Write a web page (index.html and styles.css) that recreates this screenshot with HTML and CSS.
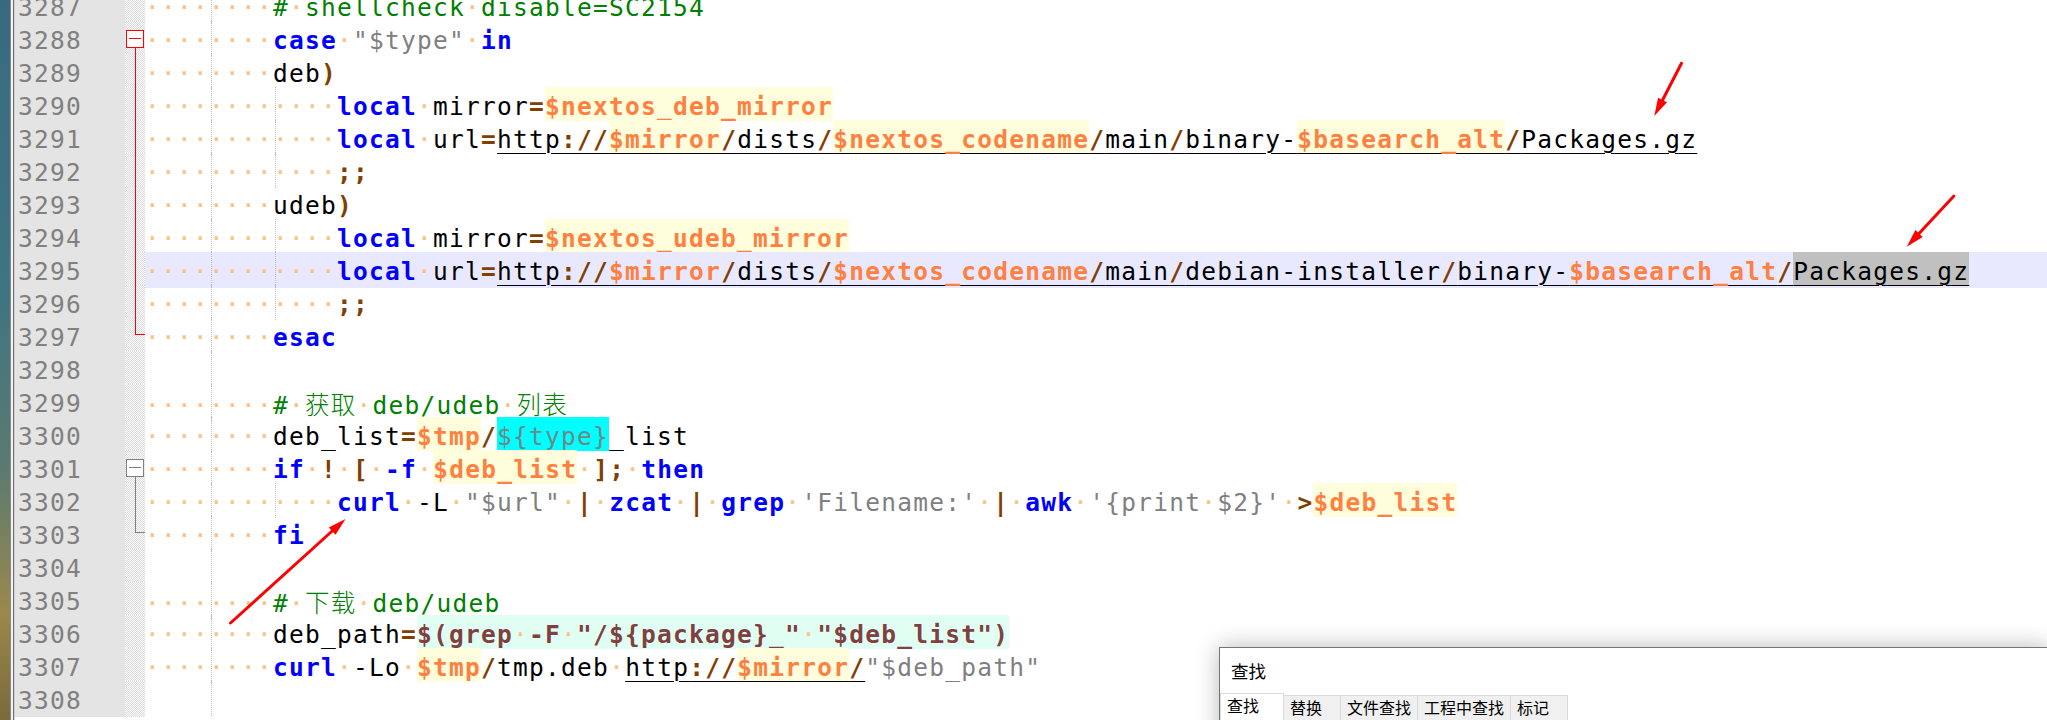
FILE: index.html
```html
<!DOCTYPE html>
<html lang="zh-CN">
  <head>
    <meta charset="UTF-8">
    <meta name="viewport" content="width=device-width, initial-scale=1.0">
    <link rel="stylesheet" href="styles.css">
    <title>Notepad++ - build.sh</title>
  </head>
  <body>
    <div class="window">
      <div class="desk"></div>
      <div class="frame"></div>
      <div class="editor">
        <div class="rows">
          <div class="row"><span class="num">3287</span><span class="fold"></span><span class="code"><i>········</i><span class="c">#<i>·</i>shellcheck<i>·</i>disable=SC2154</span></span></div>
          <div class="row"><span class="num">3288</span><span class="fold head red"><b></b></span><span class="code"><i>········</i><span class="k">case</span><i>·</i><span class="s">"$type"</span><i>·</i><span class="k">in</span></span></div>
          <div class="row"><span class="num">3289</span><span class="fold mid red"></span><span class="code"><i>········</i>deb<span class="o">)</span></span></div>
          <div class="row"><span class="num">3290</span><span class="fold mid red"></span><span class="code g2"><i>············</i><span class="k">local</span><i>·</i>mirror<span class="o">=</span><span class="v">$nextos_deb_mirror</span></span></div>
          <div class="row"><span class="num">3291</span><span class="fold mid red"></span><span class="code g2"><i>············</i><span class="k">local</span><i>·</i>url<span class="o">=</span><span class="u">http<span class="o">://</span><span class="v">$mirror</span><span class="o">/</span>dists<span class="o">/</span><span class="v">$nextos_codename</span><span class="o">/</span>main<span class="o">/</span>binary-<span class="v">$basearch_alt</span><span class="o">/</span>Packages.gz</span></span></div>
          <div class="row"><span class="num">3292</span><span class="fold mid red"></span><span class="code g2"><i>············</i><span class="o">;;</span></span></div>
          <div class="row"><span class="num">3293</span><span class="fold mid red"></span><span class="code"><i>········</i>udeb<span class="o">)</span></span></div>
          <div class="row"><span class="num">3294</span><span class="fold mid red"></span><span class="code g2"><i>············</i><span class="k">local</span><i>·</i>mirror<span class="o">=</span><span class="v">$nextos_udeb_mirror</span></span></div>
          <div class="row"><span class="num">3295</span><span class="fold mid red"></span><span class="code g2 caret"><i>············</i><span class="k">local</span><i>·</i>url<span class="o">=</span><span class="u">http<span class="o">://</span><span class="v">$mirror</span><span class="o">/</span>dists<span class="o">/</span><span class="v">$nextos_codename</span><span class="o">/</span>main<span class="o">/</span>debian-installer<span class="o">/</span>binary-<span class="v">$basearch_alt</span><span class="o">/</span><span class="sel">Packages.gz</span></span></span></div>
          <div class="row"><span class="num">3296</span><span class="fold mid red"></span><span class="code g2"><i>············</i><span class="o">;;</span></span></div>
          <div class="row"><span class="num">3297</span><span class="fold tail red"></span><span class="code"><i>········</i><span class="k">esac</span></span></div>
          <div class="row"><span class="num">3298</span><span class="fold"></span><span class="code"></span></div>
          <div class="row"><span class="num">3299</span><span class="fold"></span><span class="code"><i>········</i><span class="c">#<i>·</i><span class="cjk">获取</span><i>·</i>deb/udeb<i>·</i><span class="cjk">列表</span></span></span></div>
          <div class="row"><span class="num">3300</span><span class="fold"></span><span class="code"><i>········</i>deb_list<span class="o">=</span><span class="v">$tmp</span><span class="o">/</span><span class="p">${type}</span>_list</span></div>
          <div class="row"><span class="num">3301</span><span class="fold head grey"><b></b></span><span class="code"><i>········</i><span class="k">if</span><i>·</i><span class="o">!</span><i>·</i><span class="o">[</span><i>·</i><span class="k">-f</span><i>·</i><span class="v">$deb_list</span><i>·</i><span class="o">];</span><i>·</i><span class="k">then</span></span></div>
          <div class="row"><span class="num">3302</span><span class="fold mid grey"></span><span class="code g2"><i>············</i><span class="k">curl</span><i>·</i>-L<i>·</i><span class="s">"$url"</span><i>·</i><span class="o">|</span><i>·</i><span class="k">zcat</span><i>·</i><span class="o">|</span><i>·</i><span class="k">grep</span><i>·</i><span class="s">'Filename:'</span><i>·</i><span class="o">|</span><i>·</i><span class="k">awk</span><i>·</i><span class="s">'{print<i>·</i>$2}'</span><i>·</i><span class="o">&gt;</span><span class="v">$deb_list</span></span></div>
          <div class="row"><span class="num">3303</span><span class="fold tail grey"></span><span class="code"><i>········</i><span class="k">fi</span></span></div>
          <div class="row"><span class="num">3304</span><span class="fold"></span><span class="code"></span></div>
          <div class="row"><span class="num">3305</span><span class="fold"></span><span class="code"><i>········</i><span class="c">#<i>·</i><span class="cjk">下载</span><i>·</i>deb/udeb</span></span></div>
          <div class="row"><span class="num">3306</span><span class="fold"></span><span class="code"><i>········</i>deb_path<span class="o">=</span><span class="b">$(grep<i>·</i>-F<i>·</i>"/${package}_"<i>·</i>"$deb_list")</span></span></div>
          <div class="row"><span class="num">3307</span><span class="fold"></span><span class="code"><i>········</i><span class="k">curl</span><i>·</i>-Lo<i>·</i><span class="v">$tmp</span><span class="o">/</span>tmp.deb<i>·</i><span class="u">http<span class="o">://</span><span class="v">$mirror</span><span class="o">/</span></span><span class="s">"$deb_path"</span></span></div>
          <div class="row"><span class="num">3308</span><span class="fold"></span><span class="code"></span></div>
        </div>
      </div>
    </div>

    <div class="find">
      <h2>查找</h2>
      <div class="tabs">
        <span class="tab on">查找</span>
        <span class="tab">替换</span>
        <span class="tab">文件查找</span>
        <span class="tab">工程中查找</span>
        <span class="tab">标记</span>
      </div>
    </div>

    <svg class="marks" width="2047" height="720" viewBox="0 0 2047 720">
      <g stroke="#ff0000" stroke-width="3" stroke-linecap="round" fill="#ff0000">
        <line x1="1681.5" y1="63.3" x2="1662.6" y2="100"/>
        <polygon stroke="none" points="1654.3,116 1667,102.3 1658.1,97.7"/>
        <line x1="1953.9" y1="196" x2="1919" y2="233.5"/>
        <polygon stroke="none" points="1906.8,246.7 1922.7,236.9 1915.4,230.1"/>
        <line x1="230.5" y1="623" x2="332.2" y2="531"/>
        <polygon stroke="none" points="345.5,519 335.5,534.8 328.8,527.4"/>
      </g>
    </svg>
  </body>
</html>
```

FILE: styles.css
```css
html,
body {
  margin: 0;
}

body {
  width: 2047px;
  height: 720px;
  overflow: hidden;
  position: relative;
  background-color: #fff;
  font-family: "DejaVu Sans Mono", "Noto Sans CJK SC", monospace;
}

.window {
  display: flex;
  height: 720px;
}

.desk {
  width: 10px;
  background: linear-gradient(#376a80, #3f7482 40%, #5b7a70 65%, #9a884c 85%, #7a6a3c);
}

.frame {
  width: 5px;
  background: linear-gradient(to right, #8a8a8a 0 1px, #f2f2f2 1px 3px, #707070 3px 4px, #d0d0d0 4px);
}

.editor {
  flex: 1;
  overflow: hidden;
  font-size: 24.5px;
  letter-spacing: 1.25px;
  line-height: 33px;
}

.rows {
  margin-top: -12px;
}

.row {
  display: grid;
  grid-template-columns: 110px 20px 1fr;
  height: 33px;
}

.num {
  background-color: #e4e4e4;
  color: #808080;
  padding: 2.5px 0 0 3px;
}

/* fold margin */
.fold {
  --hatch: repeating-conic-gradient(#dcdcdc 0 25%, #fafafa 0 50%) 0 0 / 2px 2px;
  display: flex;
  align-items: center;
  background: var(--hatch);
}

.red {
  --fc: #ff0000;
}

.grey {
  --fc: #808080;
}

.fold.head {
  background: linear-gradient(var(--fc), var(--fc)) 10px 100% / 1px 50% no-repeat, var(--hatch);
}

.fold.mid {
  background: linear-gradient(var(--fc), var(--fc)) 10px 0 / 1px 100% no-repeat, var(--hatch);
}

.fold.tail {
  background:
    linear-gradient(var(--fc), var(--fc)) 10px 0 / 1px 17px no-repeat,
    linear-gradient(var(--fc), var(--fc)) 10px 16px / 10px 1px no-repeat,
    var(--hatch);
}

.fold b {
  display: flex;
  align-items: center;
  justify-content: center;
  width: 16px;
  height: 16px;
  margin-left: 1px;
  border: 1px solid var(--fc);
  background-color: #fff;
}

.fold b::after {
  content: "";
  width: 12px;
  height: 1px;
  background-color: var(--fc);
}

/* text area */
.code {
  white-space: pre;
  color: #000;
  padding-top: 2.5px;
  --guide: repeating-linear-gradient(#bdbdbd 0 1px, transparent 1px 2px);
  background: var(--guide) 66px 0 / 1px 100% no-repeat;
}

.code.g2 {
  background:
    var(--guide) 66px 0 / 1px 100% no-repeat,
    var(--guide) 130px 0 / 1px 100% no-repeat;
}

.code.caret {
  background-color: #e8e8ff;
}

.code i {
  font-style: normal;
  font-weight: normal;
  color: #ffbf80;
}

.k {
  color: #0000ff;
  font-weight: bold;
}

.o {
  color: #804000;
  font-weight: bold;
}

.s {
  color: #808080;
}

.c {
  color: #008000;
}

.cjk {
  font-family: "Noto Sans CJK SC", sans-serif;
  font-weight: 300;
}

.v,
.p,
.b,
.sel {
  padding: 4.75px 0 0;
}

.v {
  color: #ff8040;
  font-weight: bold;
  background-color: #fffedc;
}

.caret .v {
  background-color: transparent;
}

.p {
  color: #6a8a8a;
  background-color: #00ffff;
}

.b {
  color: #804040;
  font-weight: bold;
  background-color: #e0fff2;
}

.u {
  text-decoration: underline;
  text-decoration-thickness: 1px;
  text-underline-offset: 5px;
}

.sel {
  background-color: #c0c0c0;
}

/* find dialog */
.find {
  position: absolute;
  left: 1219px;
  top: 647px;
  right: -2px;
  height: 100px;
  background-color: #fff;
  border: 1px solid #767676;
  box-shadow: 0 0 22px rgba(0, 0, 0, 0.28);
  font-family: "Noto Sans CJK SC", sans-serif;
}

.find h2 {
  margin: 0;
  height: 45px;
  padding-left: 11px;
  font-size: 17.5px;
  font-weight: normal;
  line-height: 45px;
  color: #000;
}

.tabs {
  display: flex;
  align-items: flex-start;
  padding-top: 2px;
}

.tab {
  min-width: 44px;
  height: 24px;
  padding: 0 6px;
  margin-left: -1px;
  font-size: 16px;
  line-height: 22px;
  background-color: #f0f0f0;
  border: 1px solid #d9d9d9;
  border-bottom: 0;
}

.tab.on {
  min-width: 50px;
  margin-top: -2px;
  margin-left: 0;
  height: 26px;
  background-color: #fff;
}

.marks {
  position: absolute;
  left: 0;
  top: 0;
  pointer-events: none;
}
```
